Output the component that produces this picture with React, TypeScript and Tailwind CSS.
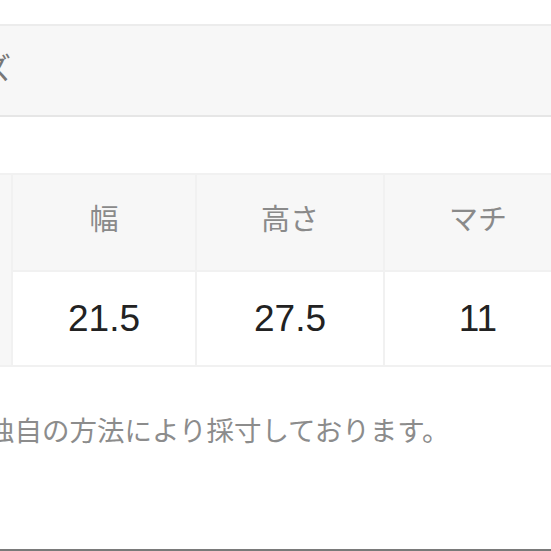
import React from "react";

const jp = { fontFamily: '"Liberation Sans", "Noto Sans CJK JP", sans-serif' };

export default function App() {
  return (
    <div className="w-[551px] h-[551px] bg-white overflow-hidden flex flex-col" style={jp}>
      <div className="mt-[24px] h-[93px] border-y-2 border-t-[#ececec] border-b-[#e6e6e6] bg-[#f7f7f7] flex items-center">
        <span className="-ml-[78px] text-[30px] leading-none text-[#777777] whitespace-nowrap -mt-[4px]">サイズ</span>
      </div>

      <div className="mt-[56px] -ml-[89px] w-[660px] bg-[#f1f1f1] py-[2px] grid grid-cols-[100px_182px_186px_186px] grid-rows-[95px_93px] gap-[2px]">
        <div className="row-span-2 bg-[#f7f7f7]" />
        {["幅", "高さ", "マチ"].map((h) => (
          <div key={h} className="bg-[#f7f7f7] flex items-center justify-center pb-[4px]">
            <span className="text-[29px] leading-none text-[#8a8a8a]">{h}</span>
          </div>
        ))}
        {["21.5", "27.5", "11"].map((v) => (
          <div key={v} className="bg-white flex items-center justify-center">
            <span className="text-[37px] leading-none text-[#222222]">{v}</span>
          </div>
        ))}
      </div>

      <div className="mt-[49px] -ml-[68px] whitespace-nowrap text-[27.5px] leading-[32px] text-[#8c8c8c]">
        弊社独自の方法により採寸しております。
      </div>

      <div className="mt-auto h-[2px] bg-[#7a7a7a]" />
    </div>
  );
}
